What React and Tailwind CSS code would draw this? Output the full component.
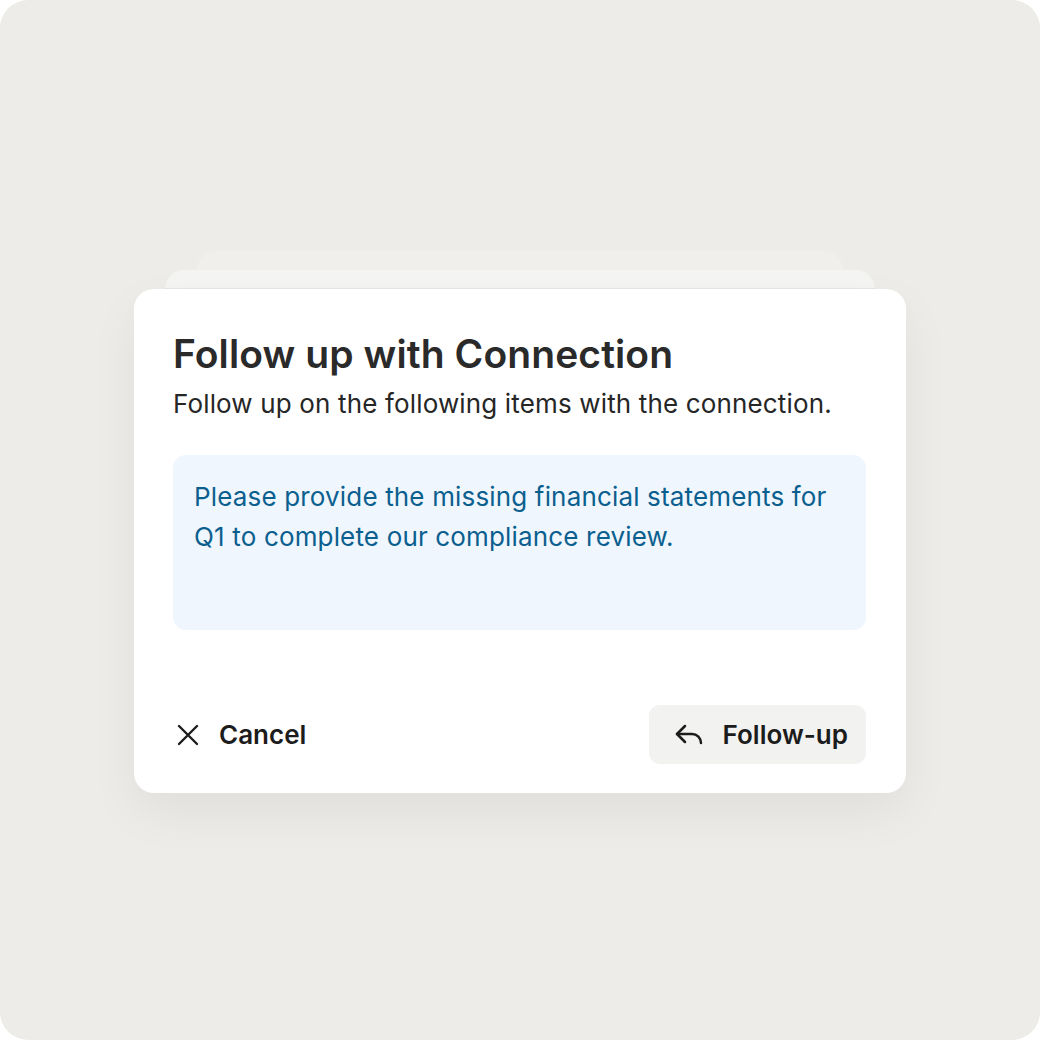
export default function App() {
    return (
        <div className="w-[1040px] h-[1040px] bg-white" style={{ fontFamily: "Inter, 'Noto Sans', sans-serif" }}>
            <div className="w-full h-full rounded-[28px] bg-[#edece8] flex items-center justify-center">
                <div className="flex flex-col items-center w-[772px] mt-[4px]">
                    {/* stacked cards behind */}
                    <div className="w-[646px] h-[19px] rounded-t-[20px] bg-[#f0efec]" />
                    <div className="w-[710px] h-[19px] rounded-t-[20px] bg-[#f4f4f2] border-b border-[#e6e5e1]" />
                    <div className="w-full h-[504px] bg-white rounded-[20px] shadow-[0_20px_50px_rgba(0,0,0,0.06)] pt-[41px] pl-[39px] pr-[40px] pb-[29px]">
                        <h1 className="text-[39px] leading-[48px] font-semibold text-[#2a2a2a] tracking-[0.1px]">
                            Follow up with Connection
                        </h1>
                        <p className="text-[26px] leading-[32px] text-[#262626] mt-[10px] tracking-[0.15px]">
                            Follow up on the following items with the connection.
                        </p>
                        <div className="mt-[35px] h-[175px] rounded-[13px] bg-[#eff6fd] pl-[21px] pr-[23px] py-[22px]">
                            <p className="text-[26px] leading-[40px] text-[#0b5f8f] tracking-[0.16px]">
                                Please provide the missing financial statements for Q1 to complete our compliance review.
                            </p>
                        </div>
                        <div className="mt-[75px] flex items-center justify-between">
                            <button className="flex items-center gap-[19px] pl-[3px] text-[26px] font-semibold text-[#1c1c1c]">
                                <svg width="24" height="24" viewBox="0 0 24 24" fill="none" stroke="currentColor" strokeWidth="2.4" strokeLinecap="round">
                                    <path d="M3 3 21 21M21 3 3 21" />
                                </svg>
                                Cancel
                            </button>
                            <button className="flex items-center gap-[20px] h-[59px] pl-[26px] pr-[18px] rounded-[11px] bg-[#f2f2f1] text-[26px] font-semibold text-[#1c1c1c]">
                                <svg width="28" height="22" viewBox="0 0 28 22" fill="none" stroke="currentColor" strokeWidth="2.5" strokeLinecap="round" strokeLinejoin="round">
                                    <path d="M10 2 2 10l8 8" />
                                    <path d="M2 10h15a9 9 0 0 1 9 9" />
                                </svg>
                                Follow-up
                            </button>
                        </div>
                    </div>
                </div>
            </div>
        </div>
    );
}
